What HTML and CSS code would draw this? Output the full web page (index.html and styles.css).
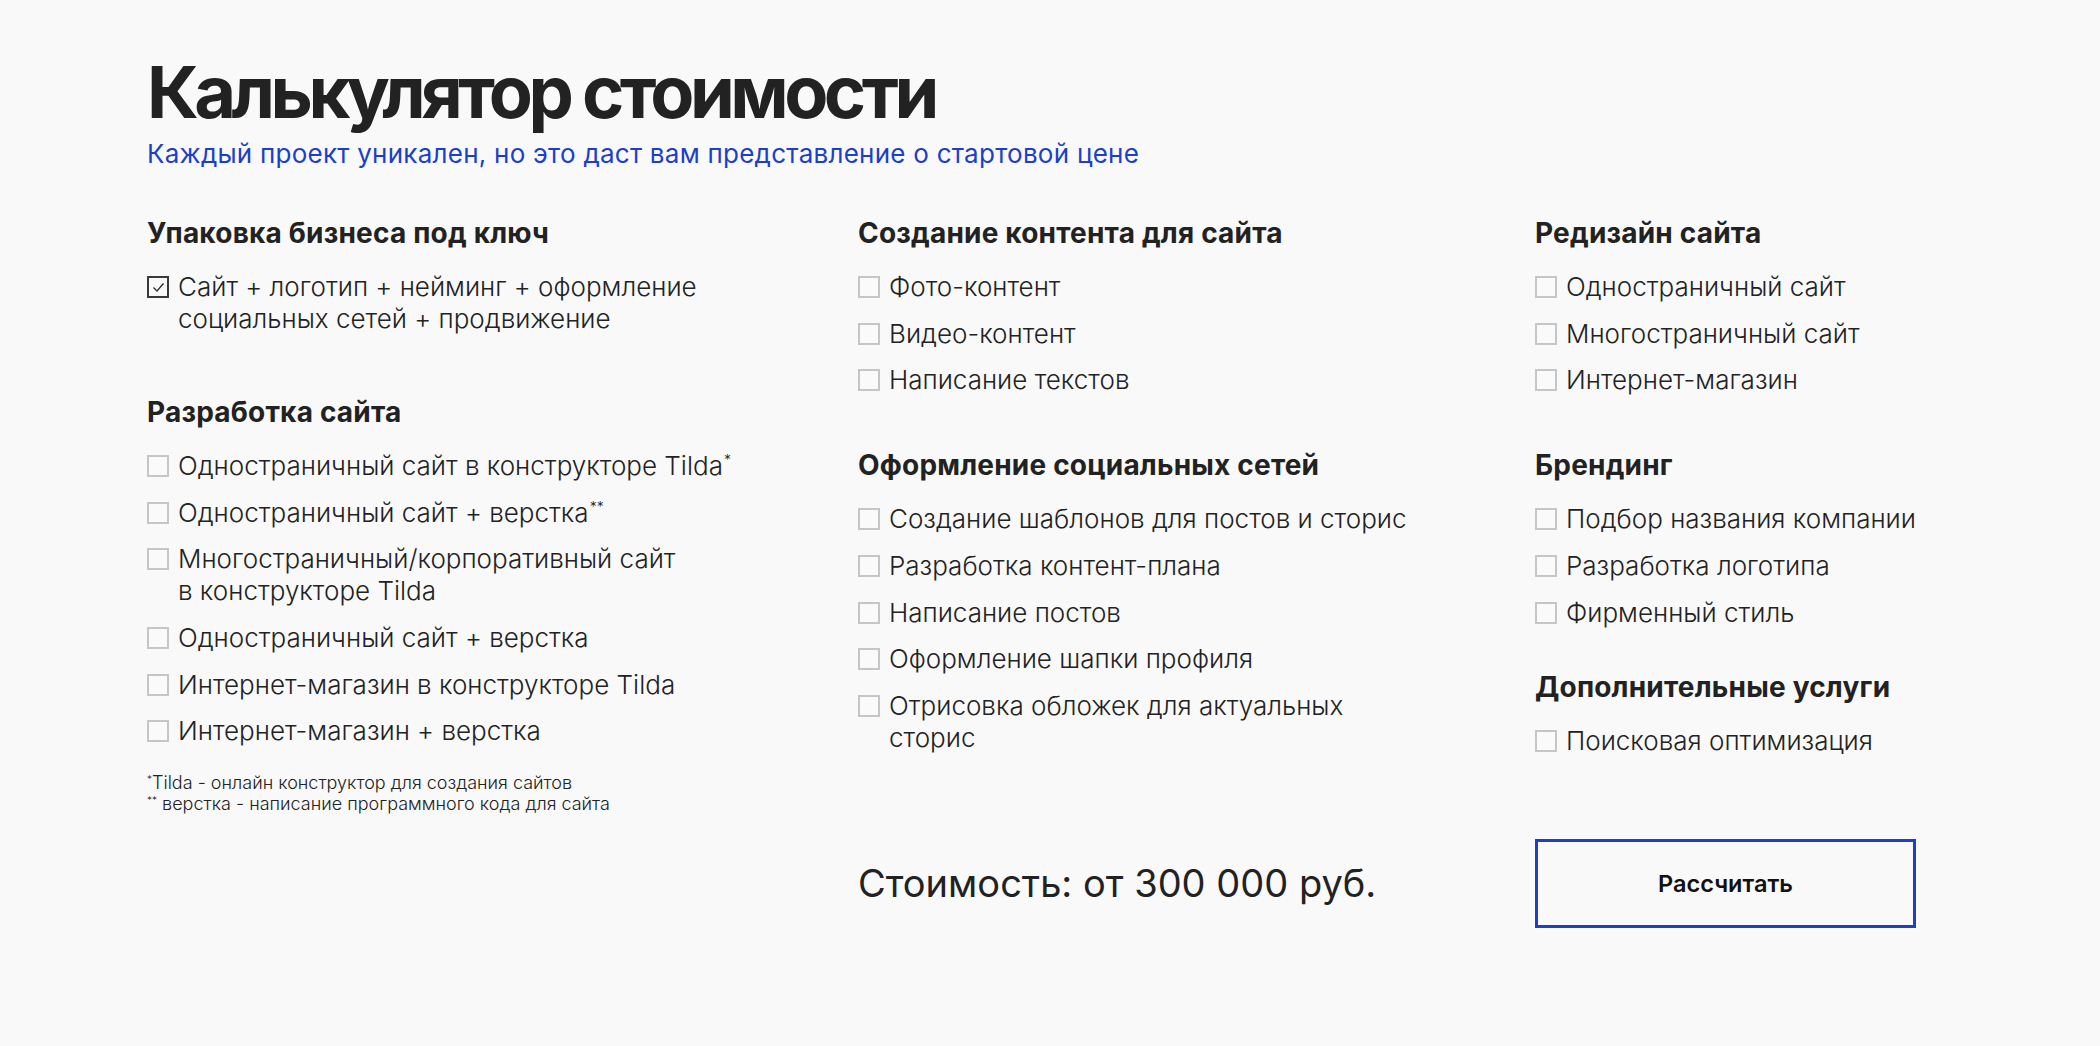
FILE: index.html
```html
<!DOCTYPE html>
<html lang="ru">
<head>
<meta charset="utf-8">
<title>Калькулятор стоимости</title>
<link rel="stylesheet" href="styles.css">
</head>
<body>
<main class="page">
  <h1 class="title">Калькулятор стоимости</h1>
  <p class="subtitle">Каждый проект уникален, но это даст вам представление о стартовой цене</p>

  <div class="calc">
    <div class="col col-1">
      <section class="group">
        <h2 class="group-title">Упаковка бизнеса под ключ</h2>
        <ul class="opts">
          <li class="opt"><span class="box checked"><svg viewBox="0 0 22 22" width="22" height="22"><polyline points="6.5,11.5 10,15 16.5,7.5" fill="none" stroke="#333" stroke-width="1.4"/></svg></span><span class="label">Сайт + логотип + нейминг + оформление<br>социальных сетей + продвижение</span></li>
        </ul>
      </section>
      <section class="group gap-lg">
        <h2 class="group-title">Разработка сайта</h2>
        <ul class="opts">
          <li class="opt"><span class="box"></span><span class="label">Одностраничный сайт в конструкторе Tilda<sup>*</sup></span></li>
          <li class="opt"><span class="box"></span><span class="label">Одностраничный сайт + верстка<sup>**</sup></span></li>
          <li class="opt"><span class="box"></span><span class="label">Многостраничный/корпоративный сайт<br>в конструкторе Tilda</span></li>
          <li class="opt"><span class="box"></span><span class="label">Одностраничный сайт + верстка</span></li>
          <li class="opt"><span class="box"></span><span class="label">Интернет-магазин в конструкторе Tilda</span></li>
          <li class="opt"><span class="box"></span><span class="label">Интернет-магазин + верстка</span></li>
        </ul>
        <p class="note"><sup>*</sup>Tilda - онлайн конструктор для создания сайтов<br><sup>**</sup> верстка - написание программного кода для сайта</p>
      </section>
    </div>

    <div class="col col-2">
      <section class="group">
        <h2 class="group-title">Создание контента для сайта</h2>
        <ul class="opts">
          <li class="opt"><span class="box"></span><span class="label">Фото-контент</span></li>
          <li class="opt"><span class="box"></span><span class="label">Видео-контент</span></li>
          <li class="opt"><span class="box"></span><span class="label">Написание текстов</span></li>
        </ul>
      </section>
      <section class="group gap-md">
        <h2 class="group-title">Оформление социальных сетей</h2>
        <ul class="opts">
          <li class="opt"><span class="box"></span><span class="label">Создание шаблонов для постов и сторис</span></li>
          <li class="opt"><span class="box"></span><span class="label">Разработка контент-плана</span></li>
          <li class="opt"><span class="box"></span><span class="label">Написание постов</span></li>
          <li class="opt"><span class="box"></span><span class="label">Оформление шапки профиля</span></li>
          <li class="opt"><span class="box"></span><span class="label">Отрисовка обложек для актуальных<br>сторис</span></li>
        </ul>
      </section>
    </div>

    <div class="col col-3">
      <section class="group">
        <h2 class="group-title">Редизайн сайта</h2>
        <ul class="opts">
          <li class="opt"><span class="box"></span><span class="label">Одностраничный сайт</span></li>
          <li class="opt"><span class="box"></span><span class="label">Многостраничный сайт</span></li>
          <li class="opt"><span class="box"></span><span class="label">Интернет-магазин</span></li>
        </ul>
      </section>
      <section class="group gap-md">
        <h2 class="group-title">Брендинг</h2>
        <ul class="opts">
          <li class="opt"><span class="box"></span><span class="label">Подбор названия компании</span></li>
          <li class="opt"><span class="box"></span><span class="label">Разработка логотипа</span></li>
          <li class="opt"><span class="box"></span><span class="label">Фирменный стиль</span></li>
        </ul>
      </section>
      <section class="group gap-sm">
        <h2 class="group-title">Дополнительные услуги</h2>
        <ul class="opts">
          <li class="opt"><span class="box"></span><span class="label">Поисковая оптимизация</span></li>
        </ul>
      </section>
    </div>

    <div class="price">Стоимость: от 300 000 руб.</div>
    <button class="btn" type="button">Рассчитать</button>
  </div>
</main>
</body>
</html>
```

FILE: styles.css
```css
* { box-sizing: border-box; }

html, body {
  margin: 0;
  padding: 0;
  background: #f9f9f9;
}

body {
  font-family: "Inter", "Noto Sans", "Open Sans", sans-serif;
  color: #222222;
}

.page {
  padding: 56px 0 0 147px;
}

.title {
  margin: 0;
  font-size: 72px;
  line-height: 72px;
  font-weight: 700;
  letter-spacing: -4.5px;
  color: #222222;
}

.subtitle {
  margin: 9.5px 0 0;
  font-size: 26px;
  line-height: 32px;
  font-weight: 400;
  letter-spacing: 0.25px;
  color: #1c3fc8;
}

.calc {
  display: grid;
  grid-template-columns: 711px 677px 1fr;
  grid-template-rows: auto auto;
  row-gap: 25px;
  margin-top: 47.5px;
}

.col {
  display: flex;
  flex-direction: column;
}

.col-1 { grid-column: 1; grid-row: 1; }
.col-2 { grid-column: 2; grid-row: 1; }
.col-3 { grid-column: 3; grid-row: 1; }

.group-title {
  margin: 0 0 22px;
  font-size: 28px;
  line-height: 32px;
  font-weight: 700;
  letter-spacing: 0.2px;
  color: #222222;
}

.gap-lg { margin-top: 61px; }
.gap-md { margin-top: 53px; }
.gap-sm { margin-top: 42px; }

.opts {
  list-style: none;
  margin: 0;
  padding: 0;
  display: flex;
  flex-direction: column;
  gap: 14.67px;
}

.opt {
  display: flex;
  align-items: flex-start;
  gap: 9px;
  font-size: 26px;
  line-height: 32px;
  font-weight: 300;
  color: #222222;
}

.box {
  flex: none;
  width: 22px;
  height: 22px;
  margin-top: 5px;
  border: 2px solid #c6c6c6;
  background: #fafafa;
  position: relative;
}

.box.checked {
  border-color: #3a3a3a;
}

.box svg {
  position: absolute;
  left: -2px;
  top: -2px;
}

.label sup {
  font-size: 14px;
  line-height: 0;
  vertical-align: top;
  position: relative;
  top: 10px;
  margin-left: 1px;
}

.note {
  margin: 24.5px 0 0;
  font-size: 18px;
  line-height: 21px;
  font-weight: 300;
  color: #222222;
}

.note sup {
  font-size: 10px;
  line-height: 0;
  vertical-align: top;
  position: relative;
  top: 7px;
}

.price {
  grid-column: 2;
  grid-row: 2;
  align-self: center;
  font-size: 38px;
  line-height: 46px;
  font-weight: 400;
  color: #222222;
}

.btn {
  grid-column: 3;
  grid-row: 2;
  width: 381px;
  height: 89px;
  border: 3px solid #1f3fc4;
  background: transparent;
  font-family: inherit;
  font-size: 23.5px;
  font-weight: 600;
  color: #111111;
  cursor: pointer;
}
```
